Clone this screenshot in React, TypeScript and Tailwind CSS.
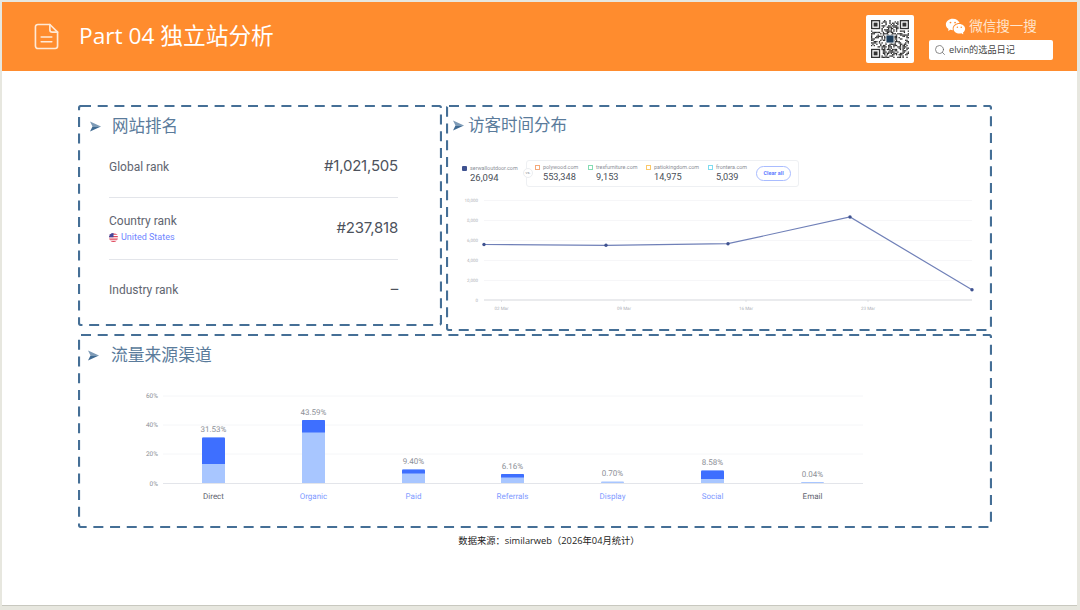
import React from 'react';
import { Search } from 'lucide-react';
import { RiWechatFill } from 'react-icons/ri';

const CJK = "font-['Open_Sans','Noto_Sans_CJK_SC',sans-serif]";

// pseudo-random modules for the QR picture
const QR_SIZE = 29;
const qrCells: [number, number][] = [];
let seed = 1337;
for (let y = 0; y < QR_SIZE; y++) {
  for (let x = 0; x < QR_SIZE; x++) {
    seed = (seed * 1103515245 + 12345) & 0x7fffffff;
    const inFinder = (x < 8 && y < 8) || (x > 20 && y < 8) || (x < 8 && y > 20);
    if (!inFinder && (seed >> 16) % 100 < 50) qrCells.push([x, y]);
  }
}

function QrCode() {
  const finders = [[0, 0], [22, 0], [0, 22]];
  return (
    <svg width="38" height="38" viewBox="0 0 29 29" className="block">
      {qrCells.map(([x, y]) => (
        <rect key={`${x}-${y}`} x={x} y={y} width="1" height="1" fill="#2b2b2b" />
      ))}
      {finders.map(([x, y]) => (
        <g key={`${x}-${y}`}>
          <rect x={x + 0.5} y={y + 0.5} width="6" height="6" fill="none" stroke="#333" strokeWidth="1" />
          <rect x={x + 2} y={y + 2} width="3" height="3" fill="#333" />
        </g>
      ))}
      <rect x="11.5" y="11.5" width="6" height="6" fill="#1f3f5c" stroke="#fff" strokeWidth="0.5" />
    </svg>
  );
}

function DocIcon() {
  return (
    <svg width="25" height="27" viewBox="0 0 26 28" fill="none" stroke="#ffe9d6" strokeWidth="1.7" strokeLinejoin="round" strokeLinecap="round" className="mt-[-1px]">
      <path d="M4 1.5h12.5L24.5 9.5V24a2.5 2.5 0 0 1-2.5 2.5H4A2.5 2.5 0 0 1 1.5 24V4A2.5 2.5 0 0 1 4 1.5Z" />
      <path d="M16.5 1.5V7a2.5 2.5 0 0 0 2.5 2.5h5.5" />
      <path d="M7.5 14.5h11M7.5 19.5h11" />
    </svg>
  );
}

function Bullet() {
  return (
    <svg width="11" height="11" viewBox="0 0 11 11" className="shrink-0">
      <path d="M0 0.5 L11 5.5 L2.5 5.5 Z" fill="#7d9ab6" />
      <path d="M0 10.5 L11 5.5 L2.5 5.5 Z" fill="#3f6a92" />
    </svg>
  );
}

function DashedFrame() {
  return (
    <svg className="absolute inset-0 w-full h-full pointer-events-none" fill="none">
      <rect x="1" y="1" rx="2" className="[width:calc(100%-2px)] [height:calc(100%-2px)]" stroke="#456f96" strokeWidth="2.2" strokeDasharray="10 6.7" />
    </svg>
  );
}

function USFlag() {
  return (
    <svg width="9" height="9" viewBox="0 0 18 18" className="shrink-0">
      <defs>
        <clipPath id="flag-circle"><circle cx="9" cy="9" r="9" /></clipPath>
      </defs>
      <g clipPath="url(#flag-circle)">
        <rect width="18" height="18" fill="#fff" />
        <rect y="1" width="18" height="2.5" fill="#e0475c" />
        <rect y="6" width="18" height="2.5" fill="#e0475c" />
        <rect y="11" width="18" height="2.5" fill="#e0475c" />
        <rect y="15.5" width="18" height="2.5" fill="#e0475c" />
        <rect width="9" height="8.5" fill="#41479b" />
      </g>
    </svg>
  );
}

function RankValue({ children }: { children: React.ReactNode }) {
  return <span className="font-['Inter',sans-serif] text-[15px] font-normal text-[#4d525c] tracking-[-0.2px]">{children}</span>;
}

function RankingBox() {
  return (
    <div className="relative w-[364px] h-[221px] shrink-0">
      <DashedFrame />
      <div className={`flex items-center gap-[11px] pl-[12px] pt-[11px] h-[31px] ${CJK} text-[16.5px] text-[#5a7b9b]`}>
        <Bullet />
        <span>网站排名</span>
      </div>
      <div className="ml-[31px] w-[289px] font-['Roboto',sans-serif] text-[12px] text-[#5f6570]">
        <div className="h-[62px] flex items-center justify-between border-b border-[#e3e5ea]">
          <span>Global rank</span>
          <RankValue>#1,021,505</RankValue>
        </div>
        <div className="h-[62px] flex items-center justify-between border-b border-[#e3e5ea]">
          <div>
            <div className="leading-[15px]">Country rank</div>
            <div className="flex items-center gap-[3px] mt-[3px] text-[9px] leading-[11px] text-[#6f86ff]">
              <USFlag />
              <span>United States</span>
            </div>
          </div>
          <RankValue>#237,818</RankValue>
        </div>
        <div className="h-[59px] flex items-center justify-between">
          <span>Industry rank</span>
          <RankValue>–</RankValue>
        </div>
      </div>
    </div>
  );
}

const competitors = [
  { name: 'polywood.com', value: '553,348', box: 'border-[#f5a97a]', width: 'w-[53px]' },
  { name: 'trexfurniture.com', value: '9,153', box: 'border-[#85dcb4]', width: 'w-[58px]' },
  { name: 'patiokingdom.com', value: '14,975', box: 'border-[#fbc96b]', width: 'w-[62px]' },
  { name: 'frontera.com', value: '5,039', box: 'border-[#7fdcf0]', width: 'w-[48px]' },
];

function VisitorChart() {
  const points = [[484, 244.5], [606, 245.3], [728, 243.7], [850, 217], [972, 289.7]];
  const grid = [
    { y: 200.5, label: '10,000' },
    { y: 220.5, label: '8,000' },
    { y: 240.5, label: '6,000' },
    { y: 260.5, label: '4,000' },
    { y: 280.5, label: '2,000' },
  ];
  const ticks = [
    { x: 501.5, label: '02 Mar' },
    { x: 624, label: '09 Mar' },
    { x: 746, label: '16 Mar' },
    { x: 868, label: '23 Mar' },
  ];
  return (
    <svg width="540" height="120" viewBox="450 195 540 120" className="block mt-[8px] ml-[4px] font-['Roboto',sans-serif] [text-rendering:geometricPrecision]">
      {grid.map((g) => (
        <g key={g.y}>
          <line x1="484" x2="972" y1={g.y} y2={g.y} stroke="#f6f6f8" strokeWidth="1" />
          <text x="478" y={g.y + 1.6} textAnchor="end" fontSize="4.5" fill="#aeb1b8">{g.label}</text>
        </g>
      ))}
      <text x="478" y="301.6" textAnchor="end" fontSize="4.5" fill="#aeb1b8">0</text>
      <line x1="484" x2="972" y1="300" y2="300" stroke="#d5d7dc" strokeWidth="1" />
      {ticks.map((t) => (
        <g key={t.x}>
          <line x1={t.x} x2={t.x} y1="300" y2="302" stroke="#d5d7dc" strokeWidth="0.7" />
          <text x={t.x} y="310" textAnchor="middle" fontSize="4.5" fill="#aeb1b8">{t.label}</text>
        </g>
      ))}
      <polyline points={points.map((p) => p.join(',')).join(' ')} fill="none" stroke="#7080b8" strokeWidth="1.2" />
      {points.map((p) => (
        <circle key={p[0]} cx={p[0]} cy={p[1]} r="1.7" fill="#3f5290" />
      ))}
    </svg>
  );
}

function VisitorBox() {
  return (
    <div className="relative w-[546px] h-[226px] shrink-0">
      <DashedFrame />
      <div className={`flex items-center gap-[4px] pl-[7px] pt-[10px] h-[30px] ${CJK} text-[16.5px] text-[#5a7b9b]`}>
        <Bullet />
        <span>访客时间分布</span>
      </div>
      <div className="flex items-center mt-[25px] pl-[16px] font-['Roboto',sans-serif]">
        <div className="w-[64px] flex gap-[3px]">
          <span className="w-[5px] h-[5px] mt-[1px] rounded-[1px] bg-[#3f5290] shrink-0" />
          <div>
            <div className="text-[5.4px] leading-[7px] text-[#8b8f98] whitespace-nowrap">serwalloutdoor.com</div>
            <div className="text-[9.5px] leading-[11px] text-[#4a4f59] whitespace-nowrap">26,094</div>
          </div>
        </div>
        <div className="relative w-[273px] h-[27px] pl-[8px] flex items-center border border-[#eef0f3] rounded-[3px]">
          <span className="absolute left-[-4px] top-[7px] w-[10px] h-[10px] rounded-full bg-white border border-[#eceef1] flex items-center justify-center text-[4px] text-[#8b8f98]">vs.</span>
          {competitors.map((c) => (
            <div key={c.name} className={`${c.width} flex gap-[3px] shrink-0 mt-[-2px]`}>
              <span className={`w-[5px] h-[5px] mt-[1px] border ${c.box} shrink-0`} />
              <div>
                <div className="text-[5.4px] leading-[7px] text-[#8b8f98] whitespace-nowrap">{c.name}</div>
                <div className="text-[9.2px] leading-[11px] text-[#4a4f59] whitespace-nowrap">{c.value}</div>
              </div>
            </div>
          ))}
          <span className="w-[35px] h-[15px] flex items-center justify-center rounded-full border border-[#a9bcff] text-[5.5px] font-bold text-[#5f7dff] shrink-0">Clear all</span>
        </div>
      </div>
      <VisitorChart />
    </div>
  );
}

const channels = [
  { name: 'Direct', value: '31.53%', x: 202, top: 437.5, split: 464, link: false },
  { name: 'Organic', value: '43.59%', x: 302, top: 420, split: 432.5, link: true },
  { name: 'Paid', value: '9.40%', x: 402, top: 469.5, split: 473.5, link: true },
  { name: 'Referrals', value: '6.16%', x: 501, top: 474, split: 477.5, link: true },
  { name: 'Display', value: '0.70%', x: 601, top: 481.5, split: 481.5, link: true },
  { name: 'Social', value: '8.58%', x: 701, top: 470.5, split: 479, link: true },
  { name: 'Email', value: '0.04%', x: 801, top: 482, split: 482, link: false },
];

function ChannelChart() {
  const axis = 483.5;
  return (
    <svg width="760" height="125" viewBox="130 385 760 125" className="block mt-[20px] ml-[52px] font-['Roboto',sans-serif] [text-rendering:geometricPrecision]">
      {[{ y: 396, l: '60%' }, { y: 425, l: '40%' }, { y: 454, l: '20%' }].map((g) => (
        <g key={g.l}>
          <line x1="163" x2="863" y1={g.y} y2={g.y} stroke="#f5f6f8" strokeWidth="1" />
          <text x="158" y={g.y + 2.2} textAnchor="end" fontSize="6.5" fill="#8d9097">{g.l}</text>
        </g>
      ))}
      <text x="158" y="485.7" textAnchor="end" fontSize="6.5" fill="#8d9097">0%</text>
      {channels.map((c) => (
        <g key={c.name}>
          <path d={`M${c.x} ${axis}V${c.top + 1}a1 1 0 0 1 1 -1H${c.x + 22}a1 1 0 0 1 1 1V${axis}Z`} fill="#a8c6ff" />
          {c.split > c.top && (
            <path d={`M${c.x} ${c.split}V${c.top + 1}a1 1 0 0 1 1 -1H${c.x + 22}a1 1 0 0 1 1 1V${c.split}Z`} fill="#3e6fff" />
          )}
          <text x={c.x + 11.5} y={c.top - 5.5} textAnchor="middle" fontSize="8" fill="#8d9097">{c.value}</text>
          <text x={c.x + 11.5} y="499" textAnchor="middle" fontSize="8" fill={c.link ? '#7f9bff' : '#5f6570'}>{c.name}</text>
        </g>
      ))}
      <line x1="163" x2="863" y1={axis} y2={axis} stroke="#e3e5ea" strokeWidth="1" />
    </svg>
  );
}

function ChannelBox() {
  return (
    <div className="relative w-[914px] h-[194px] mt-[3px]">
      <DashedFrame />
      <div className={`flex items-center gap-[12px] pl-[10px] pt-[11px] h-[31px] ${CJK} text-[16.8px] text-[#5a7b9b]`}>
        <Bullet />
        <span>流量来源渠道</span>
      </div>
      <ChannelChart />
    </div>
  );
}

export default function App() {
  return (
    <div className="w-[1080px] h-[610px] bg-[#e7e7df] pt-[2px] pl-[2px] pr-[3px] overflow-hidden">
      <div className="h-[604px] bg-white border-b border-[#c8c8bf]">
        {/* Header */}
        <div className="h-[69px] bg-[#ff8c2e] flex items-center pl-[32px]">
          <DocIcon />
          <span className={`ml-[20px] mt-[-1px] ${CJK} text-[22.7px] text-white whitespace-nowrap`}>Part 04 独立站分析</span>
          <div className="ml-auto mr-[24px] mt-[2px] flex items-center">
            <div className="w-[48px] h-[48px] bg-white rounded-[2px] flex items-center justify-center mt-[2px]">
              <QrCode />
            </div>
            <div className="ml-[15px] w-[124px] flex flex-col items-center">
              <div className={`flex items-center gap-[3px] h-[22px] ${CJK} text-[13.5px] text-[#ffe6cf] whitespace-nowrap`}>
                <RiWechatFill className="w-[21px] h-[21px] text-white" />
                <span>微信搜一搜</span>
              </div>
              <div className="mt-[3px] w-[124px] h-[20px] bg-white rounded-[2px] flex items-center pl-[5px] gap-[3px]">
                <Search className="w-[12px] h-[12px] text-[#666]" strokeWidth={1.5} />
                <span className={`${CJK} text-[9.2px] text-[#444] whitespace-nowrap`}>elvin的选品日记</span>
              </div>
            </div>
          </div>
        </div>

        {/* Panels */}
        <div className="pt-[34px] pl-[76px]">
          <div className="flex gap-[4px]">
            <RankingBox />
            <VisitorBox />
          </div>
          <ChannelBox />
          <p className={`w-[914px] mt-[6px] pl-[28px] text-center ${CJK} text-[9.3px] leading-[14px] text-[#222]`}>
            数据来源：similarweb（2026年04月统计）
          </p>
        </div>
      </div>
    </div>
  );
}
